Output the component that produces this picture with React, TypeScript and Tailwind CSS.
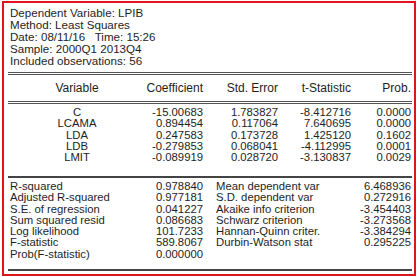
import React from 'react';

const coefs = [
    ['C', '-15.00683', '1.783827', '-8.412716', '0.0000'],
    ['LCAMA', '0.894454', '0.117064', '7.640695', '0.0000'],
    ['LDA', '0.247583', '0.173728', '1.425120', '0.1602'],
    ['LDB', '-0.279853', '0.068041', '-4.112995', '0.0001'],
    ['LMIT', '-0.089919', '0.028720', '-3.130837', '0.0029'],
];

const stats = [
    ['R-squared', '0.978840', 'Mean dependent var', '6.468936'],
    ['Adjusted R-squared', '0.977181', 'S.D. dependent var', '0.272916'],
    ['S.E. of regression', '0.041227', 'Akaike info criterion', '-3.454403'],
    ['Sum squared resid', '0.086683', 'Schwarz criterion', '-3.273568'],
    ['Log likelihood', '101.7233', 'Hannan-Quinn criter.', '-3.384294'],
    ['F-statistic', '589.8067', 'Durbin-Watson stat', '0.295225'],
    ['Prob(F-statistic)', '0.000000', '', ''],
];

const DoubleLine = () => (
    <div className="flex flex-col gap-[1px]">
        <div className="h-px bg-[#555]"></div>
        <div className="h-px bg-[#555]"></div>
    </div>
);

export default function App() {
    return (
        <div className="w-[418px] h-[277px] bg-white pt-[1px] pl-[2px] text-[12px] leading-[12px] text-[#1e1e1e]" style={{ fontFamily: '"Liberation Sans", Arial, sans-serif' }}>
            <div className="w-[414px] h-[275px] border-2 border-[#e0151b] pl-[4px] pr-[2px]">
                {/* cabeçalho */}
                <div className="pl-[2px] pt-[4px] h-[69px] text-[11.6px] leading-[12px]">
                    <div>Dependent Variable: LPIB</div>
                    <div>Method: Least Squares</div>
                    <div>Date: 08/11/16&nbsp;&nbsp; Time: 15:26</div>
                    <div>Sample: 2000Q1 2013Q4</div>
                    <div>Included observations: 56</div>
                </div>
                <DoubleLine />

                <div className="flex h-[26px] items-center">
                    <div className="w-[138px] text-center">Variable</div>
                    <div className="w-[57px] text-right">Coefficient</div>
                    <div className="w-[75px] text-right">Std. Error</div>
                    <div className="w-[73px] text-right">t-Statistic</div>
                    <div className="w-[60px] text-right">Prob.</div>
                </div>
                <DoubleLine />

                <div className="pt-[3px] h-[72px] text-[11.3px] leading-[11.3px]">
                    {coefs.map((r) => (
                        <div key={r[0]} className="flex">
                            <div className="w-[138px] text-center">{r[0]}</div>
                            <div className="w-[57px] text-right">{r[1]}</div>
                            <div className="w-[75px] text-right">{r[2]}</div>
                            <div className="w-[73px] text-right">{r[3]}</div>
                            <div className="w-[60px] text-right">{r[4]}</div>
                        </div>
                    ))}
                </div>
                <div className="h-[2px] bg-[#444]"></div>

                <div className="pt-[3px] h-[91px] text-[11.3px] leading-[11.3px]">
                    {stats.map((r) => (
                        <div key={r[0]} className="flex">
                            <div className="w-[138px] pl-[2px]">{r[0]}</div>
                            <div className="w-[57px] text-right">{r[1]}</div>
                            <div className="w-[13px]"></div>
                            <div className="w-[135px]">{r[2]}</div>
                            <div className="w-[60px] text-right">{r[3]}</div>
                        </div>
                    ))}
                </div>
                <div className="h-[2px] bg-[#444]"></div>
            </div>
        </div>
    );
}
